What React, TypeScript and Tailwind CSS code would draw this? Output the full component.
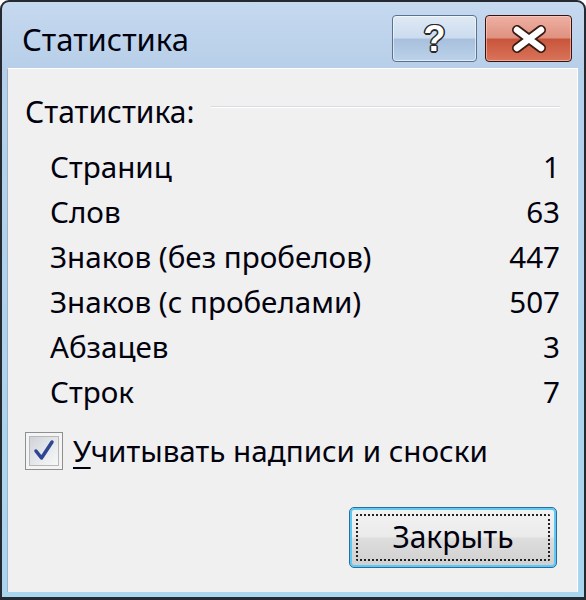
import React from "react";

const rows: [string, string][] = [
  ["Страниц", "1"],
  ["Слов", "63"],
  ["Знаков (без пробелов)", "447"],
  ["Знаков (с пробелами)", "507"],
  ["Абзацев", "3"],
  ["Строк", "7"],
];

export default function App() {
  return (
    <div className="w-[586px] h-[600px] bg-white font-['Noto_Sans',sans-serif] text-[#02020f]">
      <div className="w-full h-full flex flex-col rounded-t-[9px] border-2 border-b-[3px] border-[#262a30] bg-[linear-gradient(to_bottom,#c5d9ef_0px,#b8cfe9_66px,#b6d0ea_66px,#a9d6ef_100%)]">
        {/* Title bar */}
        <div className="h-[66px] flex pl-[20px] pr-[12px] shrink-0">
          <div className="self-center text-[31px] leading-none pt-[8px]">Статистика</div>
          <div className="ml-auto mt-[13px] flex gap-[8px] h-[47px]">
            <div className="w-[85px] h-[47px] rounded-[4px] border border-[#5b7190] shadow-[inset_0_0_0_1px_rgba(255,255,255,0.55)] bg-[linear-gradient(to_bottom,#dfe9f5_0%,#ccdcef_48%,#a8c0dd_52%,#bcd2ea_100%)] flex items-center justify-center">
              <span className="font-['Liberation_Sans',sans-serif] font-bold text-[36px] leading-none text-white [text-shadow:1.5px_0_0_#2a2a2a,-1.5px_0_0_#2a2a2a,0_1.5px_0_#2a2a2a,0_-1.5px_0_#2a2a2a,1px_1px_0_#2a2a2a,-1px_-1px_0_#2a2a2a,1px_-1px_0_#2a2a2a,-1px_1px_0_#2a2a2a]">
                ?
              </span>
            </div>
            <div className="w-[87px] h-[47px] rounded-[4px] border border-[#3b120b] shadow-[inset_0_0_0_1px_rgba(255,220,210,0.5)] bg-[linear-gradient(to_bottom,#eeb0a2_0%,#df9281_48%,#c8553b_52%,#d9745a_100%)] flex items-center justify-center">
              <svg width="40" height="28" viewBox="0 0 40 28">
                <path d="M8 5 L32 23 M32 5 L8 23" stroke="#3a1a14" strokeWidth="10" strokeLinecap="round" />
                <path d="M8 5 L32 23 M32 5 L8 23" stroke="#ffffff" strokeWidth="6.5" strokeLinecap="round" />
              </svg>
            </div>
          </div>
        </div>
        {/* Frame body */}
        <div className="flex-1 flex pl-[5px] pr-[6px] pb-[5px]">
          <div className="flex-1 flex flex-col bg-[#f0f0f0] border-t border-l border-t-white border-l-[#9fb4cc] border-r border-r-white">
            <div className="mt-[20px] h-[45px] flex items-center pl-[17px] pr-[17px] text-[30px] leading-[45px]">
              <span>Статистика:</span>
              <div className="flex-1 ml-[16px] mt-[-10px] h-[2px] border-t border-t-[#d5dde3] border-b border-b-white" />
            </div>
            <div className="mt-[10px] flex flex-col pl-[42px] pr-[17px] text-[29.6px] leading-[45px]">
              {rows.map(([label, value]) => (
                <div key={label} className="h-[45px] flex justify-between">
                  <span>{label}</span>
                  <span>{value}</span>
                </div>
              ))}
            </div>
            <div className="mt-[14px] h-[45px] flex items-center pl-[17px] text-[29.6px] leading-[45px]">
              <div className="w-[38px] h-[38px] border border-[#8e8f8f] bg-[#f4f4f4] p-[3px] shrink-0">
                <div className="w-full h-full border border-[#b8b8b8] bg-[linear-gradient(135deg,#cfd3d9_0%,#eceef0_70%,#f7f7f7_100%)] flex items-center justify-center">
                  <svg width="26" height="26" viewBox="0 0 26 26">
                    <path d="M5 13 L10.5 20 L21 4" fill="none" stroke="#2d4592" strokeWidth="3.5" strokeLinecap="round" strokeLinejoin="round" />
                  </svg>
                </div>
              </div>
              <span className="ml-[10px]">
                <span className="underline decoration-2 underline-offset-[5px]">У</span>читывать надписи и сноски
              </span>
            </div>
            <div className="mt-[34px] flex justify-end pr-[20px]">
              <div className="w-[208px] h-[61px] rounded-[5px] border border-[#2d6c9c] shadow-[inset_0_0_0_2px_#5ccaf4] bg-[linear-gradient(to_bottom,#f3f3f3_0%,#ebebeb_48%,#dddddd_52%,#cfcfcf_100%)] p-[6px]">
                <div className="w-full h-full border-2 border-dotted border-[#222] rounded-[2px] flex items-center justify-center text-[30px] leading-none pb-[2px]">
                  Закрыть
                </div>
              </div>
            </div>
          </div>
        </div>
      </div>
    </div>
  );
}
